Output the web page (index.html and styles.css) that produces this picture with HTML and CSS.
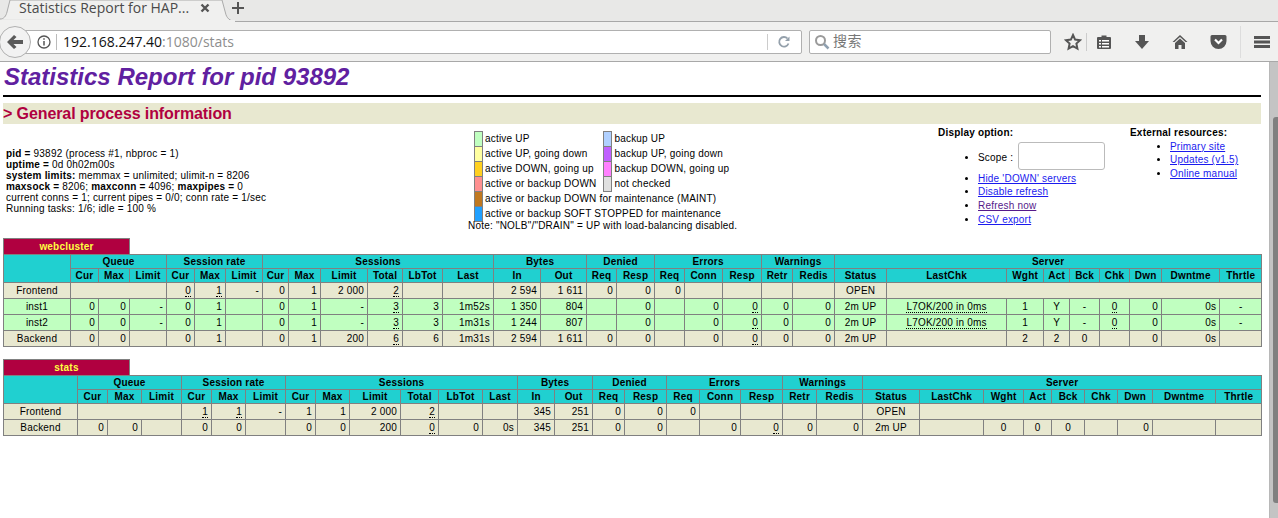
FILE: index.html
```html
<!DOCTYPE html>
<html lang="en">
<head>
<meta charset="utf-8">
<title>Statistics Report for HAProxy</title>
<link rel="stylesheet" href="styles.css">
</head>
<body>
<div class="tabbar">
  <svg class="tab-shape" width="240" height="23" viewBox="0 0 240 23"><path d="M0 19C4 19 6 16 7 12L10 0H222L225.500 13C226.500 18 230 21 235 21.500" fill="#f0f0ef" stroke="#aaa"/><path d="M0 20H235V23H0z" fill="#f0f0ef"/></svg>
  <div class="tab">
    <span class="tab-title">Statistics Report for HAP...</span>
    <svg class="tab-close" width="10" height="10" viewBox="0 0 10 10"><path d="M1.500 1.500l7 7M8.500 1.500l-7 7" stroke="#555" stroke-width="2.400"/></svg>
  </div>
  <svg class="tab-new" width="14" height="14" viewBox="0 0 14 14"><path d="M7 1v12M1 7h12" stroke="#555" stroke-width="2"/></svg>
</div>
<div class="navbar">
  <div class="backbtn">
    <svg width="16" height="14" viewBox="0 0 16 14"><path d="M7 0 0 7l7 7 2.500-2L6.500 9H16V5H6.500l3-3z" fill="#5a5a5a"/></svg>
  </div>
  <div class="urlbar">
    <svg class="info" width="14" height="14" viewBox="0 0 14 14"><circle cx="7" cy="7" r="6" fill="none" stroke="#555" stroke-width="1.300"/><path d="M7 6v4.500M7 3.200v1.600" stroke="#555" stroke-width="1.500"/></svg>
    <span class="urlsep"></span>
    <span class="url">192.168.247.40<span class="url-dim">:1080/stats</span></span>
    <span class="urlsep2"></span>
    <svg class="reload" width="14" height="14" viewBox="0 0 14 14"><path d="M11.500 8.500A4.800 4.800 0 1 1 10.500 3.500" fill="none" stroke="#94a0ab" stroke-width="1.800"/><path d="M12.500 1.500v4.500H8z" fill="#94a0ab"/></svg>
  </div>
  <div class="searchbar">
    <svg width="16" height="16" viewBox="0 0 16 16"><circle cx="6.500" cy="6.500" r="4.500" fill="none" stroke="#9a9a9a" stroke-width="2"/><path d="M10 10l4.500 4.500" stroke="#8fa0b0" stroke-width="2.500"/></svg>
    <span class="search-text">搜索</span>
  </div>
  <div class="tools">
    <svg class="t-star" width="18" height="18" viewBox="0 0 18 18"><path d="M9 2l2.100 4.600 5 .6-3.700 3.400 1 5L9 13.100 4.600 15.600l1-5L1.900 7.200l5-.6z" fill="none" stroke="#555" stroke-width="2"/></svg>
    <span class="t-sep"></span>
    <svg class="t-list" width="16" height="16" viewBox="0 0 16 16"><path d="M2 3h3.500V1.500h5V3H14a1 1 0 0 1 1 1v10a1 1 0 0 1-1 1H2a1 1 0 0 1-1-1V4a1 1 0 0 1 1-1z" fill="#555"/><path d="M3 6h2v1.500H3zM6 6h7v1.500H6zM3 9h2v1.500H3zM6 9h7v1.500H6zM3 12h2v1.500H3zM6 12h7v1.500H6z" fill="#fff"/></svg>
    <svg class="t-down" width="16" height="16" viewBox="0 0 16 16"><path d="M5 1h6v6h4l-7 8-7-8h4z" fill="#555"/></svg>
    <svg class="t-home" width="16" height="16" viewBox="0 0 16 16"><path d="M8 1 0.500 8h2L8 3l5.500 5h2z" fill="#555"/><path d="M3 9l5-4.500L13 9v6H9.500v-4h-3v4H3z" fill="#555"/></svg>
    <svg class="t-pocket" width="17" height="16" viewBox="0 0 17 16"><path d="M2 1h13a1.500 1.500 0 0 1 1.500 1.500V7a8 8 0 0 1-16 0V2.500A1.500 1.500 0 0 1 2 1z" fill="#555"/><path d="M5 5.500l3.500 3.500L12 5.500" fill="none" stroke="#fff" stroke-width="2.200"/></svg>
    <span class="t-sep2"></span>
    <svg class="t-menu" width="16" height="14" viewBox="0 0 16 14"><path d="M0 1h16v3H0zM0 5.500h16v3H0zM0 10h16v3H0z" fill="#555"/></svg>
  </div>
</div>
<div class="viewport">
  <div class="page">
    <h2 class="report-title">Statistics Report for pid 93892</h2>
    <hr class="rule">
    <h3 class="section">&gt; General process information</h3>
    <div class="info-row">
      <div class="proc">
        <p><b>pid = </b>93892 (process #1, nbproc = 1)<br>
        <b>uptime = </b>0d 0h02m00s<br>
        <b>system limits:</b> memmax = unlimited; ulimit-n = 8206<br>
        <b>maxsock = </b>8206; <b>maxconn = </b>4096; <b>maxpipes = </b>0<br>
        current conns = 1; current pipes = 0/0; conn rate = 1/sec<br>
        Running tasks: 1/6; idle = 100 %</p>
      </div>
      <div class="legend">
        <table class="lgd">
          <tr><td class="active4">&nbsp;</td><td class="noborder lab">active UP</td><td class="backup4">&nbsp;</td><td class="noborder">backup UP</td></tr>
          <tr><td class="active3">&nbsp;</td><td class="noborder lab">active UP, going down</td><td class="backup3">&nbsp;</td><td class="noborder">backup UP, going down</td></tr>
          <tr><td class="active2">&nbsp;</td><td class="noborder lab">active DOWN, going up</td><td class="backup2">&nbsp;</td><td class="noborder">backup DOWN, going up</td></tr>
          <tr><td class="active0">&nbsp;</td><td class="noborder lab">active or backup DOWN</td><td class="notchk">&nbsp;</td><td class="noborder">not checked</td></tr>
          <tr><td class="maintain">&nbsp;</td><td class="noborder" colspan="3">active or backup DOWN for maintenance (MAINT)</td></tr>
          <tr><td class="softstop">&nbsp;</td><td class="noborder" colspan="3">active or backup SOFT STOPPED for maintenance</td></tr>
        </table>
        <div class="note">Note: "NOLB"/"DRAIN" = UP with load-balancing disabled.</div>
      </div>
      <div class="display">
        <b>Display option:</b>
        <ul>
          <li class="scope">Scope : <input class="scope-input" type="text"></li>
          <li><a href="#">Hide 'DOWN' servers</a></li>
          <li><a href="#">Disable refresh</a></li>
          <li><a class="visited" href="#">Refresh now</a></li>
          <li><a href="#">CSV export</a></li>
        </ul>
      </div>
      <div class="external">
        <b>External resources:</b>
        <ul>
          <li><a href="#">Primary site</a></li>
          <li><a href="#">Updates (v1.5)</a></li>
          <li><a href="#">Online manual</a></li>
        </ul>
      </div>
    </div>

    <table class="tbl name-tbl"><tr><th class="pxname">webcluster</th></tr></table>
    <table class="tbl stats-tbl web">
      <colgroup><col><col><col><col><col><col><col><col><col><col><col><col><col><col><col><col><col><col><col><col><col><col><col><col><col><col><col><col><col><col><col></colgroup>
      <tr class="titre"><th rowspan="2"></th><th colspan="3">Queue</th><th colspan="3">Session rate</th><th colspan="6">Sessions</th><th colspan="2">Bytes</th><th colspan="2">Denied</th><th colspan="3">Errors</th><th colspan="2">Warnings</th><th colspan="9">Server</th></tr>
      <tr class="titre"><th>Cur</th><th>Max</th><th>Limit</th><th>Cur</th><th>Max</th><th>Limit</th><th>Cur</th><th>Max</th><th>Limit</th><th>Total</th><th>LbTot</th><th>Last</th><th>In</th><th>Out</th><th>Req</th><th>Resp</th><th>Req</th><th>Conn</th><th>Resp</th><th>Retr</th><th>Redis</th><th>Status</th><th>LastChk</th><th>Wght</th><th>Act</th><th>Bck</th><th>Chk</th><th>Dwn</th><th>Dwntme</th><th>Thrtle</th></tr>
      <tr class="frontend"><td class="ac">Frontend</td><td colspan="3"></td><td><u>0</u></td><td><u>1</u></td><td>-</td><td>0</td><td>1</td><td>2 000</td><td><u>2</u></td><td></td><td></td><td>2 594</td><td>1 611</td><td>0</td><td>0</td><td>0</td><td></td><td></td><td></td><td></td><td class="ac">OPEN</td><td colspan="8"></td></tr>
      <tr class="active4"><td class="ac">inst1</td><td>0</td><td>0</td><td>-</td><td>0</td><td>1</td><td></td><td>0</td><td>1</td><td>-</td><td><u>3</u></td><td>3</td><td>1m52s</td><td>1 350</td><td>804</td><td></td><td>0</td><td></td><td>0</td><td><u>0</u></td><td>0</td><td>0</td><td class="ac">2m UP</td><td class="ac"><u>L7OK/200 in 0ms</u></td><td class="ac">1</td><td class="ac">Y</td><td class="ac">-</td><td class="ac"><u>0</u></td><td>0</td><td>0s</td><td class="ac">-</td></tr>
      <tr class="active4"><td class="ac">inst2</td><td>0</td><td>0</td><td>-</td><td>0</td><td>1</td><td></td><td>0</td><td>1</td><td>-</td><td><u>3</u></td><td>3</td><td>1m31s</td><td>1 244</td><td>807</td><td></td><td>0</td><td></td><td>0</td><td><u>0</u></td><td>0</td><td>0</td><td class="ac">2m UP</td><td class="ac"><u>L7OK/200 in 0ms</u></td><td class="ac">1</td><td class="ac">Y</td><td class="ac">-</td><td class="ac"><u>0</u></td><td>0</td><td>0s</td><td class="ac">-</td></tr>
      <tr class="backend"><td class="ac">Backend</td><td>0</td><td>0</td><td></td><td>0</td><td>1</td><td></td><td>0</td><td>1</td><td>200</td><td><u>6</u></td><td>6</td><td>1m31s</td><td>2 594</td><td>1 611</td><td>0</td><td>0</td><td></td><td>0</td><td><u>0</u></td><td>0</td><td>0</td><td class="ac">2m UP</td><td></td><td class="ac">2</td><td class="ac">2</td><td class="ac">0</td><td></td><td>0</td><td>0s</td><td></td></tr>
    </table>

    <table class="tbl name-tbl second"><tr><th class="pxname">stats</th></tr></table>
    <table class="tbl stats-tbl sta">
      <colgroup><col><col><col><col><col><col><col><col><col><col><col><col><col><col><col><col><col><col><col><col><col><col><col><col><col><col><col><col><col><col><col></colgroup>
      <tr class="titre"><th rowspan="2"></th><th colspan="3">Queue</th><th colspan="3">Session rate</th><th colspan="6">Sessions</th><th colspan="2">Bytes</th><th colspan="2">Denied</th><th colspan="3">Errors</th><th colspan="2">Warnings</th><th colspan="9">Server</th></tr>
      <tr class="titre"><th>Cur</th><th>Max</th><th>Limit</th><th>Cur</th><th>Max</th><th>Limit</th><th>Cur</th><th>Max</th><th>Limit</th><th>Total</th><th>LbTot</th><th>Last</th><th>In</th><th>Out</th><th>Req</th><th>Resp</th><th>Req</th><th>Conn</th><th>Resp</th><th>Retr</th><th>Redis</th><th>Status</th><th>LastChk</th><th>Wght</th><th>Act</th><th>Bck</th><th>Chk</th><th>Dwn</th><th>Dwntme</th><th>Thrtle</th></tr>
      <tr class="frontend"><td class="ac">Frontend</td><td colspan="3"></td><td><u>1</u></td><td><u>1</u></td><td>-</td><td>1</td><td>1</td><td>2 000</td><td><u>2</u></td><td></td><td></td><td>345</td><td>251</td><td>0</td><td>0</td><td>0</td><td></td><td></td><td></td><td></td><td class="ac">OPEN</td><td colspan="8"></td></tr>
      <tr class="backend"><td class="ac">Backend</td><td>0</td><td>0</td><td></td><td>0</td><td>0</td><td></td><td>0</td><td>0</td><td>200</td><td><u>0</u></td><td>0</td><td>0s</td><td>345</td><td>251</td><td>0</td><td>0</td><td></td><td>0</td><td><u>0</u></td><td>0</td><td>0</td><td class="ac">2m UP</td><td></td><td class="ac">0</td><td class="ac">0</td><td class="ac">0</td><td></td><td>0</td><td></td><td></td></tr>
    </table>
  </div>
  <div class="scrollbar"><div class="thumb"></div></div>
</div>
</body>
</html>
```
FILE: styles.css
```css
* { box-sizing: border-box; }
html, body { margin: 0; height: 100%; overflow: hidden; }
body { font-family: "Liberation Sans", Arial, sans-serif; font-size: 10px; color: #000; background: #fff; display: flex; flex-direction: column; }

.tabbar { height: 22px; flex: none; background: #e8e8e7; border-bottom: 1px solid #a8a8a8; display: flex; align-items: flex-start; position: relative; }
.tab-shape { position: absolute; left: 0; top: 0; }
.tab { width: 224px; height: 21px; display: flex; align-items: center; padding: 0 0 6px 19px; position: relative; }
.tab-title { font-family: "Open Sans", "Noto Sans", sans-serif; font-size: 14px; color: #4a4a4a; white-space: nowrap; width: 181px; }
.tab-new { margin: 1px 0 0 7px; position: relative; }
.navbar { height: 40px; flex: none; background: #f0f0ef; border-bottom: 1px solid #a8a8a8; display: flex; align-items: center; position: relative; }
.backbtn { position: absolute; left: -1px; top: 4px; width: 32px; height: 32px; border-radius: 50%; border: 1px solid #b0b0b0; background: #f2f2f2; display: flex; align-items: center; justify-content: center; z-index: 1; }
.urlbar { margin-left: 20px; width: 782px; height: 24px; background: #fff; border: 1px solid #b0b0b0; border-radius: 2px; display: flex; align-items: center; padding-left: 16px; }
.urlsep { width: 1px; height: 16px; background: #bbb; margin: 0 6px 0 5px; }
.info { flex: none; margin-right: 0; }
.url { font-family: "Open Sans", "Noto Sans", sans-serif; font-size: 14px; color: #111; width: 704px; white-space: nowrap; }
.url-dim { color: #8e8e8e; }
.urlsep2 { width: 1px; height: 16px; background: #ccc; flex: none; margin-left: 0; }
.reload { margin-left: 9px; flex: none; }
.searchbar { margin-left: 7px; width: 242px; height: 24px; background: #fff; border: 1px solid #b0b0b0; border-radius: 2px; display: flex; align-items: center; padding-left: 4px; gap: 3px; }
.search-text { font-family: "Noto Sans CJK SC", sans-serif; font-size: 14px; line-height: 20px; color: #777; margin-top: -3px; letter-spacing: 0.5px; }
.tools { display: flex; align-items: center; margin-left: 13px; }
.t-sep { width: 1px; height: 18px; background: #ccc; margin: 0 9px 0 4px; }
.t-down { margin-left: 22px; }
.t-home { margin-left: 22px; }
.t-pocket { margin-left: 22px; }
.t-sep2 { width: 1px; height: 32px; background: #ddd; margin: 0 13px 0 13px; }
.t-menu { flex: none; }

.viewport { flex: 1; min-height: 0; display: flex; overflow: hidden; }
.page { flex: 1; min-width: 0; padding: 1px 8px 0 3px; font-size: 10px; letter-spacing: 0.2px; }
.scrollbar { width: 9px; flex: none; background: #c4c4c4; border-left: 1px solid #b8b8b8; padding: 55px 0 0 3px; }
.thumb { height: 386px; background: #808080; border-radius: 3px 0 0 3px; }

.report-title { font-family: "Liberation Sans", Arial, sans-serif; font-size: 24px; font-weight: bold; font-style: italic; color: #6020a0; margin: 0; line-height: 27px; padding-left: 1px; letter-spacing: 0; }
.rule { margin: 5px 0 0; border: 0; border-bottom: 2px solid #000; height: 2px; }
.section { font-family: "Liberation Sans", Arial, sans-serif; font-size: 16px; font-weight: bold; color: #b00040; background: #e8e8d0; margin: 6px 0 0; height: 21px; line-height: 21px; letter-spacing: -0.1px; }

.info-row { display: flex; height: 111px; position: relative; }
.proc { width: 465px; padding-top: 24px; flex: none; }
.proc p { margin: 0; padding-left: 3px; line-height: 11px; }
.legend { width: 470px; flex: none; padding-top: 7px; }
.lgd { border-collapse: collapse; margin-left: 6px; }
.lgd td { border: 1px solid gray; padding: 2px; line-height: 10px; }
.lgd td.noborder { border: none; padding: 2px; white-space: nowrap; }
.lgd td.lab { padding-right: 7px; }
.note { line-height: 11px; margin-top: -2px; }
.display { width: 192px; flex: none; padding-top: 3px; }
.external { flex: 1; padding-top: 3px; }
.info-row ul { margin: 0; padding-left: 40px; list-style: disc; }
.external ul { margin-top: -1px; }
.info-row li { margin-top: 2.670px; margin-right: 20px; line-height: 11px; }
.info-row li.scope { margin-top: 3px; }
a { color: #1a1aee; }
a.visited { color: #551a8b; }
.scope-input { width: 87px; height: 28px; border: 1px solid #bbb; border-radius: 3px; background: #fff; margin-left: 2px; vertical-align: baseline; }
.display b, .external b { display: block; line-height: 12px; }

.tbl { border-collapse: collapse; font-size: 10px; }
.name-tbl { width: 127px; margin-top: 3px; }
.name-tbl.second { margin-top: 12px; }
.stats-tbl { width: 1258px; table-layout: fixed; }
.tbl th { border: 1px solid gray; padding: 0 3px; line-height: 13px; font-weight: bold; }
.tbl th.pxname { background: #b00040; color: #ffff40; border-bottom: none; padding: 2px 3px; line-height: 11px; }
.tbl td { border: 1px solid gray; padding: 2px 3px; text-align: right; white-space: nowrap; line-height: 11px; height: 16px; }
.tbl td.ac { text-align: center; }
.titre { background: #20d0d0; color: #000; text-align: center; }
.frontend, .backend { background: #e8e8d0; }
.active0 { background: #ff9090; }
.active2 { background: #ffd020; }
.active3 { background: #ffffa0; }
.active4 { background: #c0ffc0; }
.backup2 { background: #ff80ff; }
.backup3 { background: #c060ff; }
.backup4 { background: #b0d0ff; }
.maintain { background: #c07820; }
.softstop { background: #20a0ff; }
.notchk { background: #e0e0e0; }
u { text-decoration: none; border-bottom: 1px dotted #000; }

.web col:nth-child(1) { width: 67px; }
.web col:nth-child(2) { width: 28px; }
.web col:nth-child(3) { width: 31px; }
.web col:nth-child(4) { width: 37px; }
.web col:nth-child(5) { width: 28px; }
.web col:nth-child(6) { width: 31px; }
.web col:nth-child(7) { width: 37px; }
.web col:nth-child(8) { width: 26px; }
.web col:nth-child(9) { width: 32px; }
.web col:nth-child(10) { width: 47px; }
.web col:nth-child(11) { width: 35px; }
.web col:nth-child(12) { width: 40px; }
.web col:nth-child(13) { width: 51px; }
.web col:nth-child(14) { width: 47px; }
.web col:nth-child(15) { width: 46px; }
.web col:nth-child(16) { width: 30px; }
.web col:nth-child(17) { width: 38px; }
.web col:nth-child(18) { width: 30px; }
.web col:nth-child(19) { width: 38px; }
.web col:nth-child(20) { width: 39px; }
.web col:nth-child(21) { width: 31px; }
.web col:nth-child(22) { width: 42px; }
.web col:nth-child(23) { width: 52px; }
.web col:nth-child(24) { width: 120px; }
.web col:nth-child(25) { width: 37px; }
.web col:nth-child(26) { width: 26px; }
.web col:nth-child(27) { width: 30px; }
.web col:nth-child(28) { width: 30px; }
.web col:nth-child(29) { width: 32px; }
.web col:nth-child(30) { width: 58px; }
.web col:nth-child(31) { width: 42px; }

.sta col:nth-child(1) { width: 74px; }
.sta col:nth-child(2) { width: 30px; }
.sta col:nth-child(3) { width: 34px; }
.sta col:nth-child(4) { width: 40px; }
.sta col:nth-child(5) { width: 30px; }
.sta col:nth-child(6) { width: 34px; }
.sta col:nth-child(7) { width: 40px; }
.sta col:nth-child(8) { width: 30px; }
.sta col:nth-child(9) { width: 34px; }
.sta col:nth-child(10) { width: 51px; }
.sta col:nth-child(11) { width: 38px; }
.sta col:nth-child(12) { width: 44px; }
.sta col:nth-child(13) { width: 35px; }
.sta col:nth-child(14) { width: 37px; }
.sta col:nth-child(15) { width: 38px; }
.sta col:nth-child(16) { width: 32px; }
.sta col:nth-child(17) { width: 42px; }
.sta col:nth-child(18) { width: 33px; }
.sta col:nth-child(19) { width: 41px; }
.sta col:nth-child(20) { width: 42px; }
.sta col:nth-child(21) { width: 34px; }
.sta col:nth-child(22) { width: 46px; }
.sta col:nth-child(23) { width: 57px; }
.sta col:nth-child(24) { width: 64px; }
.sta col:nth-child(25) { width: 40px; }
.sta col:nth-child(26) { width: 28px; }
.sta col:nth-child(27) { width: 33px; }
.sta col:nth-child(28) { width: 33px; }
.sta col:nth-child(29) { width: 35px; }
.sta col:nth-child(30) { width: 63px; }
.sta col:nth-child(31) { width: 46px; }
```
